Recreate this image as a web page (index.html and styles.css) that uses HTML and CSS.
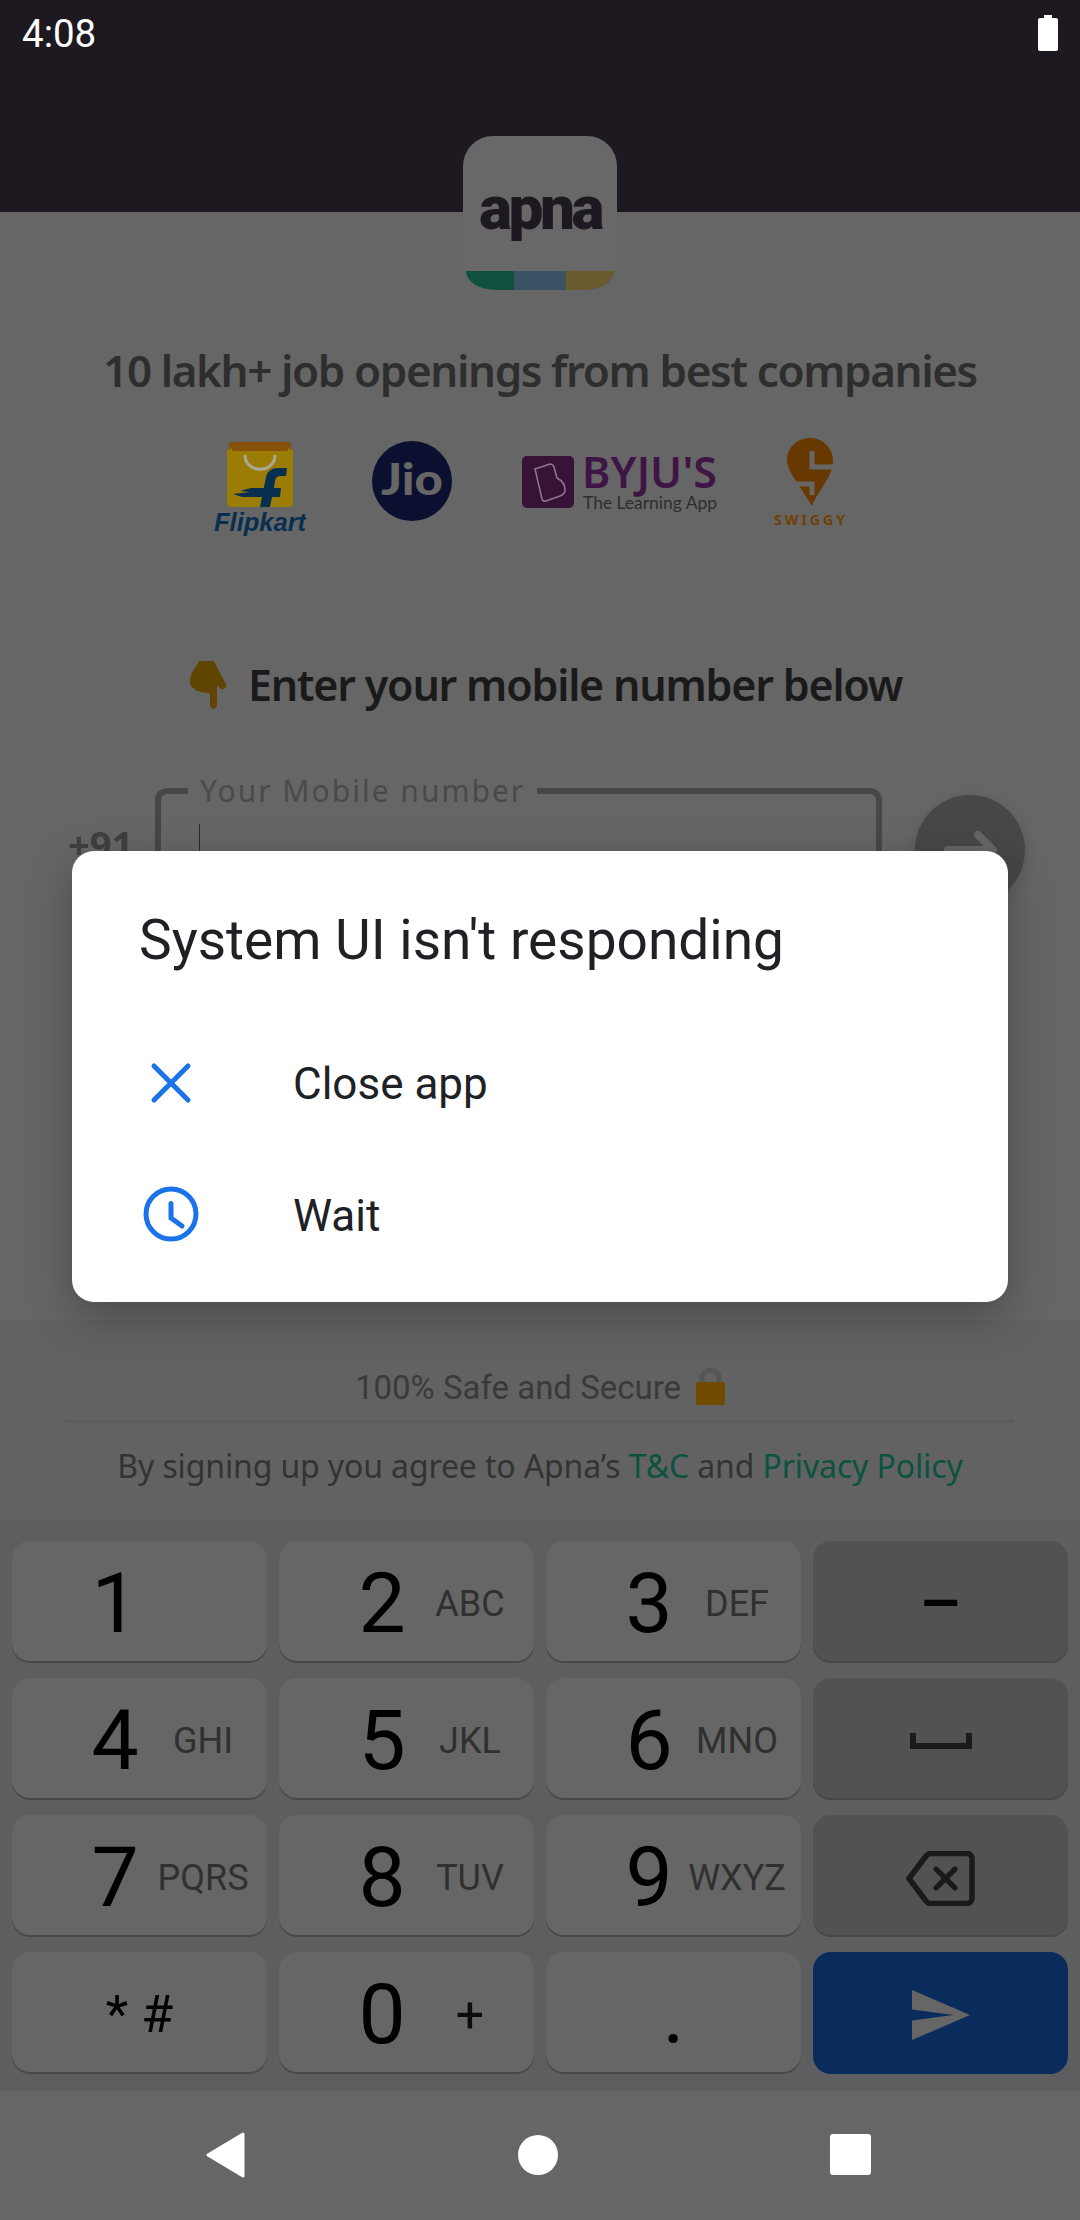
FILE: index.html
```html
<!DOCTYPE html>
<html lang="en">
<head>
<meta charset="utf-8">
<title>apna</title>
<link rel="stylesheet" href="styles.css">
</head>
<body>
<div class="phone">
  <header class="hero">
    <div class="status">
      <span class="time">4:08</span>
      <svg class="battery" viewBox="0 0 20 36"><path d="M6 0h8v3h4a2 2 0 0 1 2 2v29a2 2 0 0 1-2 2H2a2 2 0 0 1-2-2V5a2 2 0 0 1 2-2h4z"/></svg>
    </div>
    <div class="logo">
      <span class="logo-word">apna</span>
      <div class="logo-band"><i class="band-green"></i><i class="band-blue"></i><i class="band-gold"></i></div>
    </div>
  </header>

  <main class="content">
    <h1 class="headline">10 lakh+ job openings from best companies</h1>
    <div class="brands">
      <svg class="brand brand-flipkart" viewBox="0 0 92 100">
        <path class="fk-top" d="M18 0h56a3 3 0 0 1 3 3v9H15V3a3 3 0 0 1 3-3z"/>
        <path class="fk-bag" d="M13 8l5-2v3h56V6l5 2v54a3 3 0 0 1-3 3H16a3 3 0 0 1-3-3z"/>
        <path class="fk-handle" d="M31 13c0 19 30 19 30 0"/>
        <path class="fk-f" d="M46 65l6-30q2-9 12-9h9l-1 8h-6q-4 0-5 5l-1 7h7l-1 9h-8l-2 10zM51 46l-2 9H28l-9-3 17-2-10-1 11-3z"/>
        <text class="fk-word" x="0" y="89">Flipkart</text>
      </svg>
      <svg class="brand brand-jio" viewBox="0 0 80 80">
        <circle class="jio-disc" cx="40" cy="40" r="40"/>
        <text class="jio-word" x="40" y="54" text-anchor="middle" textLength="62" lengthAdjust="spacingAndGlyphs">Jio</text>
      </svg>
      <svg class="brand brand-byju" viewBox="0 -14 195 76">
        <rect class="by-box" x="0" y="2" width="52" height="52" rx="5"/>
        <path class="by-b" d="M13 15l15-5q3 0 4 3l3 11q8 4 8 12 0 4-5 6l-14 5q-3 1-4-2z"/>
        <text class="by-word" x="60" y="34" textLength="135">BYJU'S</text>
        <text class="by-sub" x="61" y="55" textLength="134">The Learning App</text>
      </svg>
      <svg class="brand brand-swiggy" viewBox="0 0 71 90">
        <path class="sw-pin" d="M36 0c13 0 23 10 23 23 0 10-6 19-11 27-4 6-8 12-10 18-3-5-9-14-14-22-4-7-11-15-11-24C13 10 23 0 36 0z"/>
        <path class="sw-cut" d="M38 13v16h21M13 46h25v11"/>
        <text class="sw-word" x="0" y="87" textLength="71">SWIGGY</text>
      </svg>
    </div>
    <div class="prompt">
      <svg class="hand" viewBox="0 0 37 48"><path d="M9 0h15l4 8 8 15c1 5-4 6-5 5l-4-4v20c0 5-7 5-7 0V32c-3 1-5 0-5-1-3 1-5 0-5-1-4 1-5-1-5-2-4-2-5-4-5-6C0 10 5 9 9 0z"/></svg>
      <h2 class="prompt-text">Enter your mobile number below</h2>
    </div>
    <div class="phone-row">
      <span class="dial-code">+91</span>
      <div class="field">
        <span class="field-label">Your Mobile number</span>
        <span class="caret"></span>
      </div>
      <button class="go">
        <svg viewBox="0 0 110 110"><path d="M33 55h44M63 40l15 15-15 15"/></svg>
      </button>
    </div>
  </main>

  <footer class="legal">
    <p class="secure">100% Safe and Secure
      <svg class="lock" viewBox="0 0 29 37"><path class="lock-hook" d="M6 16V9a8.500 6.500 0 0 1 17 0v7"/><rect class="lock-body" x="0" y="14" width="29" height="23" rx="2"/></svg>
    </p>
    <hr class="rule">
    <p class="terms">By signing up you agree to Apna’s <a>T&amp;C</a> and <a>Privacy Policy</a></p>
  </footer>

  <section class="keyboard">
    <div class="key"><b>1</b></div>
    <div class="key"><b>2</b><span>ABC</span></div>
    <div class="key"><b>3</b><span>DEF</span></div>
    <div class="key key-fn key-center"><b class="dash">–</b></div>
    <div class="key"><b>4</b><span>GHI</span></div>
    <div class="key"><b>5</b><span>JKL</span></div>
    <div class="key"><b>6</b><span>MNO</span></div>
    <div class="key key-fn key-center"><svg class="ico-space" viewBox="0 0 62 16"><path d="M3 0v13h56V0"/></svg></div>
    <div class="key"><b>7</b><span>PQRS</span></div>
    <div class="key"><b>8</b><span>TUV</span></div>
    <div class="key"><b>9</b><span>WXYZ</span></div>
    <div class="key key-fn key-center"><svg class="ico-back" viewBox="0 0 69 55"><path class="bk-outline" d="M3 27.500L20 5a6 6 0 0 1 4-2.500h37a5 5 0 0 1 5 5v40a5 5 0 0 1-5 5H24a6 6 0 0 1-4-2.500z"/><path class="bk-x" d="M29 17l21 21M50 17L29 38"/></svg></div>
    <div class="key key-center"><b class="symbols">* #</b></div>
    <div class="key"><b>0</b><span class="plus">+</span></div>
    <div class="key key-center"><b>.</b></div>
    <div class="key key-send key-center"><svg class="ico-send" viewBox="2 3 21 18" preserveAspectRatio="none"><path d="M2 21l21-9L2 3v7l15 2-15 2z"/></svg></div>
  </section>

  <nav class="navbar">
    <svg class="nav-ico" viewBox="0 0 40 46"><path d="M38 2L3 23l35 21z"/></svg>
    <span class="nav-home"></span>
    <span class="nav-recent"></span>
  </nav>

  <div class="dialog">
    <h3 class="dialog-title">System UI isn't responding</h3>
    <div class="dialog-row">
      <svg class="dialog-ico" viewBox="0 0 64 64"><path d="M15 15l34 34M49 15L15 49"/></svg>
      <span class="dialog-label">Close app</span>
    </div>
    <div class="dialog-row">
      <svg class="dialog-ico" viewBox="0 0 64 64"><circle cx="32" cy="32" r="25"/><path class="clock-hand" d="M32 21.500V36l11 8"/></svg>
      <span class="dialog-label">Wait</span>
    </div>
  </div>
</div>
</body>
</html>
```
FILE: styles.css
```css
* { box-sizing: border-box; }
html, body { margin: 0; padding: 0; }
body { font-family: "Noto Sans", Roboto, sans-serif; background: #666; }
h1, h2, h3, p { margin: 0; font-weight: inherit; }

.phone {
  position: relative;
  width: 1080px;
  height: 2220px;
  display: flex;
  flex-direction: column;
  overflow: hidden;
  background: #666;
}

/* header */
.hero { height: 212px; background: #1e1920; flex: none; position: relative; }
.status { display: flex; justify-content: space-between; padding: 11px 22px 0 22px; height: 60px; }
.time { font: 400 38.500px/46px Roboto, sans-serif; color: #fff; }
.battery { width: 20px; height: 36px; margin-top: 4px; fill: #fff; }

.logo {
  position: absolute;
  left: 463px;
  top: 136px;
  width: 154px;
  height: 154px;
  border-radius: 30px;
  background: #686868;
  text-align: center;
}
.logo-word {
  display: block;
  margin-top: 37px;
  font: 900 62px/70px Roboto, sans-serif;
  letter-spacing: -3.500px;
  color: #1e1920;
}
.logo-band {
  position: absolute;
  left: 3px;
  right: 3px;
  bottom: 0;
  height: 19px;
  display: flex;
  border-radius: 0 0 30px 30px / 0 0 19px 19px;
  overflow: hidden;
}
.logo-band i { display: block; height: 100%; }
.band-green { width: 48px; background: #10503f; }
.band-blue { width: 52px; background: #3a5264; }
.band-gold { width: 48px; background: #6a5a2e; }

/* body */
.content { flex: 1; min-height: 0; overflow: hidden; }
.headline {
  margin-top: 127px;
  font-size: 44px;
  line-height: 62px;
  font-weight: 600;
  letter-spacing: -1.400px;
  text-align: center;
  color: #2e2e2e;
}
.brands { display: flex; align-items: flex-start; height: 100px; margin-top: 37px; padding-left: 214px; }
.brand { display: block; flex: none; }
.brand-flipkart { width: 92px; height: 100px; margin-top: 4px; }
.brand-jio { width: 80px; height: 80px; margin-top: 3px; margin-left: 66px; }
.brand-byju { width: 195px; height: 76px; margin-top: 2px; margin-left: 70px; }
.brand-swiggy { width: 71px; height: 90px; margin-left: 57px; }

.fk-top { fill: #87510a; }
.fk-bag { fill: #9b7c05; }
.fk-handle { fill: none; stroke: #a8a89a; stroke-width: 3; }
.fk-f { fill: #072f50; }
.fk-word { font: italic 700 25.500px "Liberation Sans", sans-serif; fill: #072f50; }
.jio-disc { fill: #0b1030; }
.jio-word { font: 900 44px Lato, sans-serif; fill: #666; }
.by-box { fill: #381338; }
.by-b { fill: none; stroke: #8d7a8d; stroke-width: 1.500; }
.by-word { font: 600 43px "Noto Sans", sans-serif; fill: #3e1545; }
.by-sub { font: 400 17.500px Lato, sans-serif; fill: #2e2e2e; }
.sw-pin { fill: #673900; }
.sw-cut { fill: none; stroke: #666; stroke-width: 5; }
.sw-word { font: 700 14px "Noto Sans", sans-serif; fill: #6f4003; }

.prompt { display: flex; align-items: center; gap: 21px; height: 60px; margin-top: 117px; padding-left: 190px; }
.hand { width: 37px; height: 48px; fill: #604500; flex: none; }
.prompt-text {
  font-size: 43px;
  line-height: 60px;
  font-weight: 600;
  letter-spacing: -1.200px;
  color: #1a1a1a;
}

.phone-row { display: flex; align-items: flex-start; margin-top: 73px; padding-left: 68px; }
.dial-code { width: 87px; margin-top: 33px; font: 700 38px/46px "Noto Sans", sans-serif; color: #404040; }
.field {
  position: relative;
  width: 727px;
  height: 140px;
  border: 6px solid #474747;
  border-radius: 12px;
}
.field-label {
  position: absolute;
  left: 27px;
  top: -23px;
  padding: 0 12px;
  background: #666;
  font-size: 30px;
  line-height: 40px;
  letter-spacing: 2px;
  color: #4a4a4a;
  white-space: nowrap;
}
.caret { position: absolute; left: 38px; top: 30px; width: 1px; height: 60px; background: #2a2a2a; }
.go {
  width: 110px;
  height: 110px;
  margin: 7px 0 0 33px;
  padding: 0;
  border: 0;
  border-radius: 50%;
  background: #474747;
  box-shadow: 0 4px 14px rgba(0, 0, 0, .14);
}
.go svg { display: block; width: 110px; height: 110px; fill: none; stroke: #666; stroke-width: 8; stroke-linecap: round; stroke-linejoin: round; }

/* legal */
.legal { height: 200px; flex: none; background: #626262; text-align: center; padding-top: 46px; }
.secure {
  display: flex;
  justify-content: center;
  align-items: center;
  gap: 15px;
  height: 44px;
  font: 400 33px/44px Roboto, sans-serif;
  color: #3a3a3a;
}
.lock { width: 29px; height: 37px; margin-top: -4px; }
.lock-hook { fill: none; stroke: #565656; stroke-width: 5; }
.lock-body { fill: #704a00; }
.rule { height: 3px; margin: 10px 66px 0 65px; border: 0; background: #5b5b5b; }
.terms {
  margin-top: 21px;
  font-size: 32px;
  line-height: 44px;
  letter-spacing: -0.130px;
  color: #333;
}
.terms a { color: #0c5240; }

/* keyboard */
.keyboard {
  height: 571px;
  flex: none;
  display: grid;
  grid-template-columns: repeat(4, 255px);
  grid-auto-rows: 122px;
  column-gap: 12px;
  row-gap: 15px;
  padding: 21px 12px 0;
  background: #5c5e60;
}
.key {
  display: grid;
  grid-template-columns: 64px 112px;
  padding: 4px 0 0 71px;
  align-items: center;
  justify-items: center;
  border-radius: 18px;
  background: #666;
  box-shadow: inset 0 -2px 0 #484849;
  color: #000;
  white-space: nowrap;
}
.key b { font: 400 84px/1 Roboto, sans-serif; }
.key span { font: 400 36px/1 Roboto, sans-serif; color: #303030; }
.key span.plus { font-size: 50px; color: #0c0c0c; }
.key-center { display: flex; justify-content: center; padding-left: 0; }
.key-fn { background: #525254; }
.key-send { background: #0a2c5c; box-shadow: none; }
.key b.symbols { font-size: 52px; }
.key b.dash { font-size: 66px; font-weight: 500; color: #000; }
.ico-space { width: 62px; height: 16px; fill: none; stroke: #1a1a1a; stroke-width: 6; }
.ico-back { width: 69px; height: 55px; fill: none; stroke: #1a1a1a; stroke-width: 5.500; stroke-linejoin: round; }
.bk-x { stroke-width: 6; stroke-linecap: round; transform: scale(.9); transform-origin: 39.500px 27.500px; }
.ico-send { width: 58px; height: 50px; fill: #666; }

/* nav */
.navbar {
  height: 129px;
  flex: none;
  display: flex;
  align-items: center;
  justify-content: space-between;
  padding: 0 209px 2px 205px;
  background: #666;
}
.nav-ico { width: 40px; height: 46px; fill: #fff; stroke: #fff; stroke-width: 3; stroke-linejoin: round; }
.nav-home { width: 40px; height: 40px; border-radius: 50%; background: #fff; }
.nav-recent { width: 41px; height: 41px; border-radius: 3px; background: #fff; }

/* dialog */
.dialog {
  position: absolute;
  left: 72px;
  top: 851px;
  width: 936px;
  height: 451px;
  padding: 60px 0 0 67px;
  border-radius: 22px;
  background: #fff;
  box-shadow: 0 14px 46px rgba(0, 0, 0, .28);
  color: #202124;
  font-family: Roboto, sans-serif;
}
.dialog-title { font-size: 55px; line-height: 58px; font-weight: 400; margin-bottom: 48px; }
.dialog-row { display: flex; align-items: center; gap: 90px; height: 131.500px; font-size: 44px; }
.dialog-label { padding-top: 3px; }
.dialog-ico { width: 64px; height: 64px; fill: none; stroke: #1a73e8; stroke-width: 5; stroke-linecap: round; }
```
